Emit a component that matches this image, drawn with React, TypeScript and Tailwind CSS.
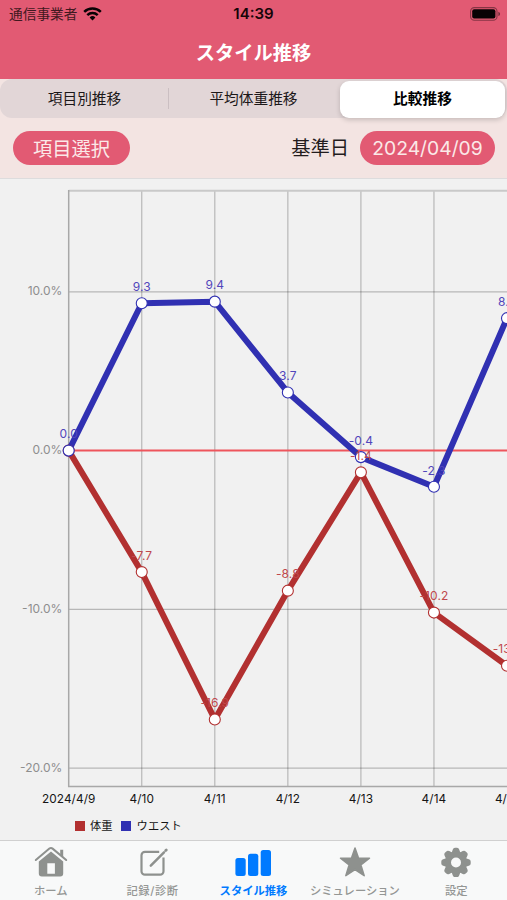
import React from "react";

const STEP = 73.05;
const X0 = 68.7;
const ZERO = 271.6;
const SCALE = 15.88;

const px = (i: number) => X0 + i * STEP;
const py = (v: number) => ZERO - v * SCALE;

type Series = { name: string; line: string; text: string; values: number[]; ys: number[] };

const weight: Series = {
  name: "体重",
  line: "#b23030",
  text: "#bf484c",
  values: [0.0, -7.7, -16.9, -8.8, -1.4, -10.2, -13.5],
  ys: [0, -7.65, -16.93, -8.82, -1.37, -10.2, -13.55],
};
const waist: Series = {
  name: "ウエスト",
  line: "#3030b2",
  text: "#5146bb",
  values: [0.0, 9.3, 9.4, 3.7, -0.4, -2.3, 8.3],
  ys: [0, 9.28, 9.38, 3.66, -0.41, -2.28, 8.34],
};

const dates = ["2024/4/9", "4/10", "4/11", "4/12", "4/13", "4/14", "4/15"];
const levels = [10, 0, -10, -20];

function Line({ s }: { s: Series }) {
  return (
    <polyline
      points={s.ys.map((v, i) => `${px(i)},${py(v)}`).join(" ")}
      fill="none"
      stroke={s.line}
      strokeWidth="6"
      strokeLinejoin="bevel"
    />
  );
}

function Dots({ s }: { s: Series }) {
  return (
    <g>
      {s.ys.map((v, i) => (
        <circle key={i} cx={px(i)} cy={py(v)} r="5.5" fill="#fff" stroke={s.line} strokeWidth="1.1" />
      ))}
    </g>
  );
}

function Labels({ s, skipFirst }: { s: Series; skipFirst?: boolean }) {
  return (
    <g fill={s.text} fontSize="12" textAnchor="middle" letterSpacing="0.1">
      {s.values.map((v, i) =>
        skipFirst && i === 0 ? null : (
          <text key={i} x={px(i)} y={py(s.ys[i]) - 12.3}>
            {v.toFixed(1)}
          </text>
        ),
      )}
    </g>
  );
}

function Chart() {
  return (
    <svg width="507" height="630" viewBox="0 0 507 630" className="block font-['Inter','Noto_Sans_CJK_JP',sans-serif]">
      <g stroke="#000" strokeOpacity="0.24" strokeWidth="1.2">
        {dates.map((_, i) =>
          i === 0 || i === dates.length - 1 ? null : <line key={i} x1={px(i)} x2={px(i)} y1="11.5" y2="607.5" />,
        )}
        {levels
          .filter((l) => l !== 0)
          .map((l) => (
            <line key={l} x1={X0} x2="507" y1={py(l)} y2={py(l)} />
          ))}
      </g>
      <line x1={X0} x2="507" y1="11.8" y2="11.8" stroke="#c9c9c9" strokeWidth="2" />
      <path d={`M${X0} 11V607.5H507`} fill="none" stroke="#a8a8a8" strokeWidth="1.5" />
      <line x1={X0} x2="507" y1={ZERO} y2={ZERO} stroke="#ee555c" strokeWidth="2" />
      <g fill="#8e8e8e" fontSize="12" textAnchor="end">
        {levels.map((l) => (
          <text key={l} x="62.3" y={py(l) + 3.6}>
            {l.toFixed(1)}%
          </text>
        ))}
      </g>
      <g fill="#151515" fontSize="11.8" textAnchor="middle" letterSpacing="0.1">
        {dates.map((d, i) => (
          <text key={d} x={px(i)} y="624.3">
            {d}
          </text>
        ))}
      </g>
      <Line s={weight} />
      <Line s={waist} />
      <Dots s={weight} />
      <Dots s={waist} />
      <Labels s={weight} skipFirst />
      <Labels s={waist} />
    </svg>
  );
}

function Wifi() {
  return (
    <svg width="19" height="14" viewBox="0 0 19 14" fill="none" stroke="#080204" strokeWidth="2.5">
      <path d="M1.2 4.9a11.9 11.9 0 0 1 16.6 0" />
      <path d="M4.3 8.1a7.5 7.5 0 0 1 10.4 0" />
      <path d="M9.5 13.4 6.6 10.5a4.1 4.1 0 0 1 5.8 0Z" fill="#080204" stroke="none" />
    </svg>
  );
}

function Battery() {
  return (
    <svg width="31" height="14" viewBox="0 0 31 14">
      <rect x="0.6" y="0.6" width="26.4" height="12.6" rx="3.8" fill="none" stroke="#080204" strokeOpacity="0.42" strokeWidth="1.1" />
      <rect x="2.2" y="2.2" width="23.2" height="9.4" rx="2" fill="#080204" />
      <path d="M28.4 4.7c2.2.8 2.2 3.6 0 4.4Z" fill="#080204" fillOpacity="0.5" />
    </svg>
  );
}

function HomeIcon() {
  return (
    <svg width="34" height="32" viewBox="0 0 34 32" fill="#8e918e">
      <path d="M1.8 15 15.4 3.6Q17 2.3 18.6 3.600L32.200 15" fill="none" stroke="#8e918e" strokeWidth="2" strokeLinecap="round" />
      <path d="M26.200 4.700h3v7.600l-3-2.500Z" />
      <path d="M4.800 16.400 17 6.400 29.200 16.400V28.400a3 3 0 0 1-3 3H7.800a3 3 0 0 1-3-3ZM13.300 18.200v10.600h7.600V18.200Z" fillRule="evenodd" />
    </svg>
  );
}

function EditIcon() {
  return (
    <svg width="34" height="32" viewBox="0 0 34 32" fill="none" stroke="#8e918e" strokeWidth="2.200">
      <path d="M24.200 6.800H10A3.500 3.500 0 0 0 6.500 10.300V26.200A3.500 3.500 0 0 0 10 29.700H25A3.500 3.500 0 0 0 28.500 26.200V12.500" />
      <path d="M15.800 20.600 29 7.300" strokeWidth="2.500" strokeLinecap="round" />
      <path d="M30.700 5.500 31.300 4.900" strokeWidth="2.800" strokeLinecap="round" />
    </svg>
  );
}

function BarsIcon() {
  return (
    <svg width="38" height="32" viewBox="0 0 38 32" fill="#007aff">
      <rect x="1.400" y="13" width="10.300" height="18" rx="2.500" />
      <rect x="14" y="8.800" width="10.300" height="22.200" rx="2.500" />
      <rect x="26.700" y="4.900" width="10.300" height="26.100" rx="2.500" />
    </svg>
  );
}

function StarIcon() {
  return (
    <svg width="34" height="32" viewBox="0 0 34 32" fill="#8e918e" stroke="#8e918e" strokeWidth="1.500" strokeLinejoin="round">
      <path d="M17 3 20.500 12.900 31.500 13.200 22.900 19.900 26.200 30.700 17 24.600 7.800 30.700 11.100 19.900 2.500 13.200 13.500 12.900Z" />
    </svg>
  );
}

function GearIcon() {
  return (
    <svg width="34" height="32" viewBox="0 0 34 32">
      <g transform="translate(17 17.500)" fill="#8e918e">
        {[0, 45, 90, 135, 180, 225, 270, 315].map((a) => (
          <path key={a} transform={`rotate(${a})`} d="M-4.600 -9 -3.300 -12.800Q-2.700 -14.700 -1 -14.700H1Q2.700 -14.700 3.300 -12.800L4.600 -9Z" />
        ))}
        <circle r="8" fill="none" stroke="#8e918e" strokeWidth="6" />
      </g>
    </svg>
  );
}

const tabs = [
  { label: "ホーム", icon: <HomeIcon /> },
  { label: "記録/診断", icon: <EditIcon />, spaced: true },
  { label: "スタイル推移", icon: <BarsIcon />, active: true },
  { label: "シミュレーション", icon: <StarIcon /> },
  { label: "設定", icon: <GearIcon /> },
];

export default function App() {
  return (
    <div className="flex h-[900px] w-[507px] flex-col overflow-hidden bg-[#f1f1f1] font-['Inter','Noto_Sans_CJK_JP',sans-serif]">
      <header className="h-[79px] shrink-0 bg-[#e25a73]">
        <div className="grid h-7 grid-cols-3 items-center pr-[6px] pl-[9px]">
          <div className="flex items-center gap-[6px]">
            <span className="text-[13.7px] leading-7 text-[#401820]">通信事業者</span>
            <Wifi />
          </div>
          <div className="pr-[3px] text-center text-[15px] leading-7 font-semibold text-[#160508]">14:39</div>
          <div className="flex justify-end">
            <Battery />
          </div>
        </div>
        <h1 className="mt-[7px] text-center text-[19.3px] leading-9 font-bold text-white">スタイル推移</h1>
      </header>

      <div className="h-[100px] shrink-0 border-b border-[#dddcdd] bg-[#f3e4e2]">
        <div className="grid h-[39px] grid-cols-3 rounded-[12px] bg-[#e2d6d7] text-center text-[14.7px] leading-[41px] text-[#1c1819]">
          <div className="relative">
            項目別推移
            <span className="absolute top-[9px] right-0 h-[21px] w-px bg-[#cbbfc2]" />
          </div>
          <div>平均体重推移</div>
          <div className="mt-[2px] mr-[2px] mb-[2px] ml-[2px] rounded-[9px] bg-white leading-[37px] font-bold text-black shadow-[0_2px_5px_rgba(0,0,0,0.18)]">
            比較推移
          </div>
        </div>
        <div className="mt-[12px] flex h-[35px] items-center pr-[12px] pl-[13px]">
          <button className="h-[34px] w-[117px] rounded-full bg-[#e25a73] text-[19.3px] leading-[36px] text-[#fbe9e8]">項目選択</button>
          <span className="mt-[2px] ml-auto text-[19.3px] text-[#231c1d]">基準日</span>
          <button className="ml-[11px] h-[34px] w-[135px] rounded-full bg-[#e25a73] text-[19.3px] leading-[35px] text-[#fbe9e8]">
            2024/04/09
          </button>
        </div>
      </div>

      <main className="h-[661px] shrink-0">
        <Chart />
        <div className="mt-[8px] flex h-[18px] items-center pl-[75px] text-[11.3px] leading-[18px] text-[#151515]">
          <span className="mr-[5px] h-[10px] w-[10px] bg-[#b23030]" />
          {weight.name}
          <span className="mr-[6px] ml-[8px] h-[10px] w-[10px] bg-[#3030b2]" />
          {waist.name}
        </div>
      </main>

      <nav className="grid h-[60px] shrink-0 grid-cols-5 border-t border-[#d0d0d0] bg-[#f8f9f9]">
        {tabs.map((t) => (
          <div
            key={t.label}
            className={
              t.active
                ? "flex flex-col items-center pt-[4px] text-[11.3px] font-bold whitespace-nowrap text-[#007aff]"
                : "flex flex-col items-center pt-[4px] text-[11.3px] font-medium whitespace-nowrap text-[#949694]"
            }
          >
            {t.icon}
            <span className={t.spaced ? "mt-[6px] pl-[1px] leading-[16px] tracking-[0.6px]" : "mt-[6px] leading-[16px]"}>{t.label}</span>
          </div>
        ))}
      </nav>
    </div>
  );
}
